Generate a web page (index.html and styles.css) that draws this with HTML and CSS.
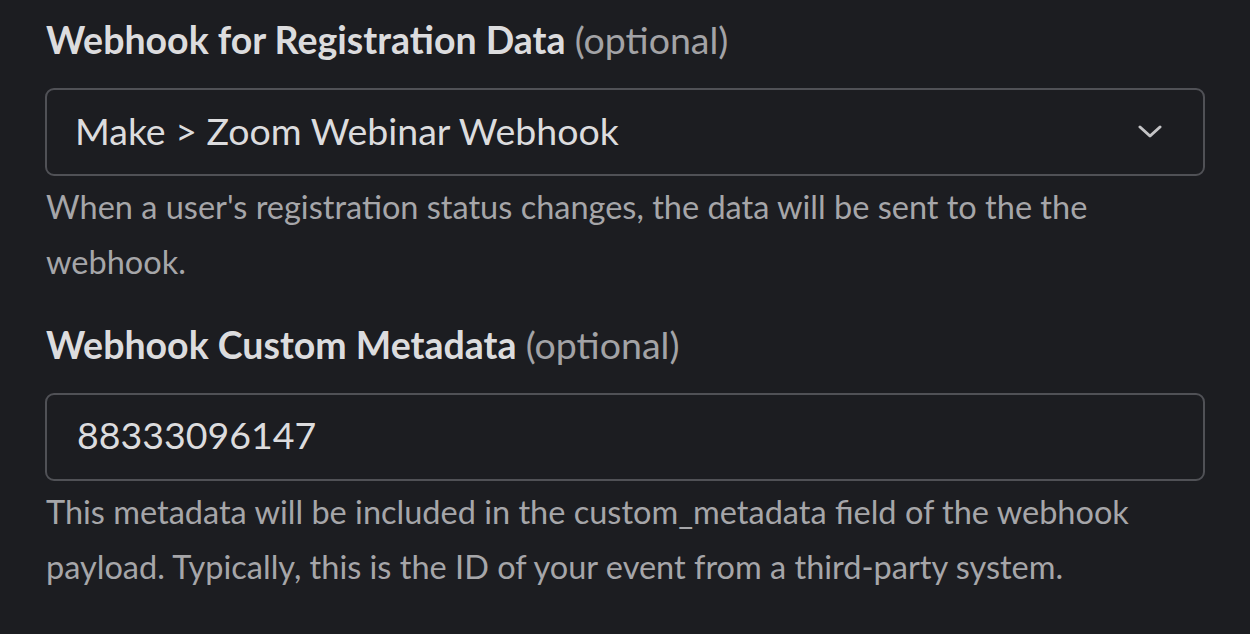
FILE: index.html
```html
<!DOCTYPE html>
<html lang="en">
<head>
<meta charset="utf-8">
<link rel="stylesheet" href="styles.css">
</head>
<body>
<div class="form">
  <div class="field">
    <label class="label">Webhook for Registration Data <span class="opt">(optional)</span></label>
    <div class="control select">
      <span class="value">Make &gt; Zoom Webinar Webhook</span>
      <svg class="chev" width="24" height="14" viewBox="0 0 24 14"><path d="M2 2 L12 11 L22 2" fill="none" stroke="#c4c4c6" stroke-width="3" stroke-linecap="round" stroke-linejoin="round"/></svg>
    </div>
    <p class="help">When a user's registration status changes, the data will be sent to the the webhook.</p>
  </div>
  <div class="field">
    <label class="label">Webhook Custom Metadata <span class="opt">(optional)</span></label>
    <div class="control input">
      <span class="value">88333096147</span>
    </div>
    <p class="help">This metadata will be included in the custom_metadata field of the webhook payload. Typically, this is the ID of your event from a third-party system.</p>
  </div>
</div>
</body>
</html>
```

FILE: styles.css
```css
html, body {
  margin: 0;
  padding: 0;
  background: #1c1d21;
}
body {
  font-family: Lato, "Noto Sans", sans-serif;
  color: #d9d9db;
}
.form {
  padding: 17px 45px 0 45px;
  display: flex;
  flex-direction: column;
  gap: 33px;
}
.field {
  display: flex;
  flex-direction: column;
}
.label {
  display: block;
  font-size: 37.5px;
  line-height: 45px;
  font-weight: 700;
  color: #dcdcde;
  padding-left: 1px;
  margin-bottom: 26px;
}
.opt {
  font-weight: 400;
  color: #a3a3a6;
}
.control {
  box-sizing: border-box;
  height: 88px;
  border: 2px solid #505156;
  border-radius: 9px;
  display: flex;
  align-items: center;
  justify-content: space-between;
  padding: 0 41px 0 28px;
  font-size: 37.5px;
  color: #dcdcde;
}
.value {
  margin-bottom: 3px;
}
.input .value {
  padding-left: 2px;
  margin-bottom: 5px;
}
.chev {
  display: block;
}
.help {
  margin: 3px 0 0 0;
  padding-left: 1px;
  font-size: 32.5px;
  line-height: 55px;
  color: #a6a6a9;
}
```
